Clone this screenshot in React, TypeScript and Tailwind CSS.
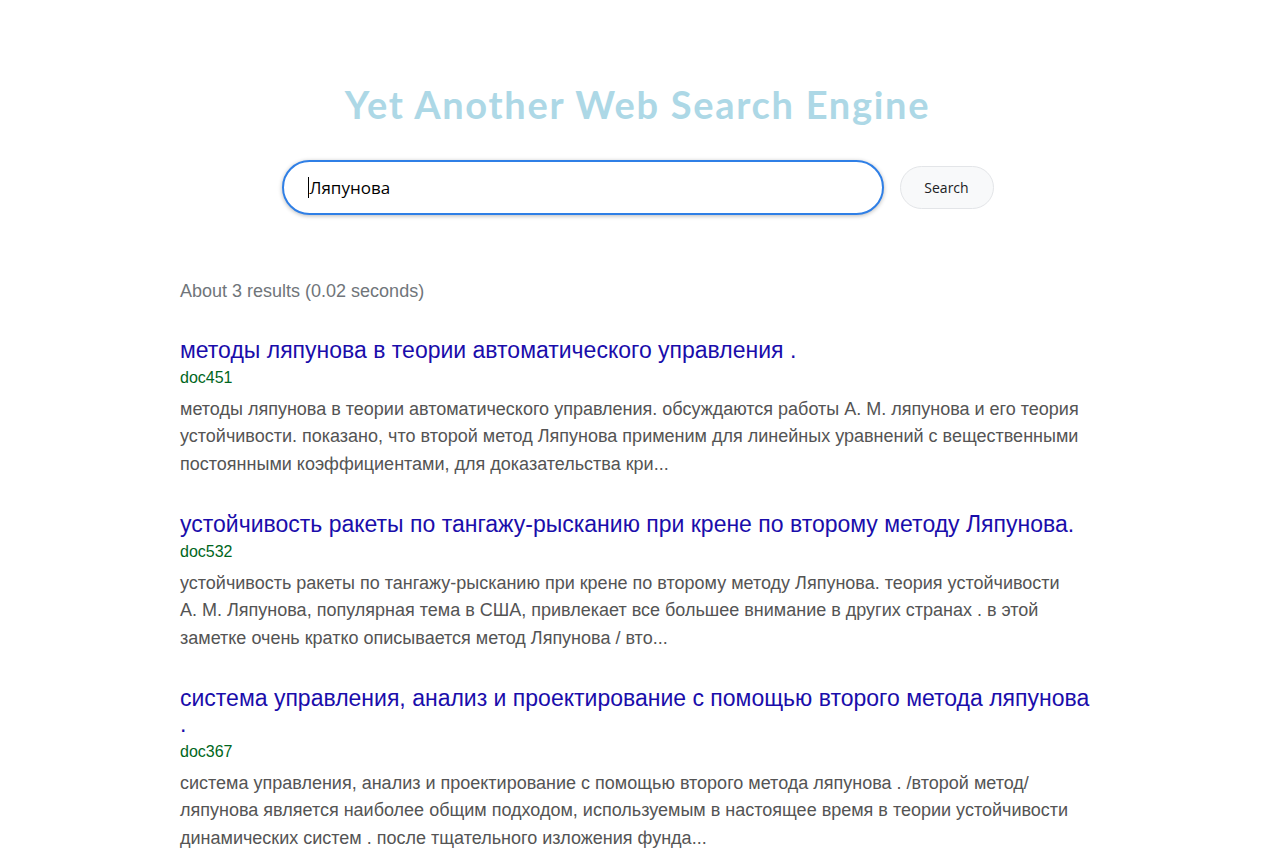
import React from "react";

const results = [
  {
    title: "методы ляпунова в теории автоматического управления .",
    doc: "doc451",
    snippet:
      "методы ляпунова в теории автоматического управления. обсуждаются работы А.\u00a0М. ляпунова и его теория устойчивости. показано, что второй метод Ляпунова применим для линейных уравнений с вещественными постоянными коэффициентами, для доказательства кри...",
  },
  {
    title: "устойчивость ракеты по тангажу-рысканию при крене по второму методу Ляпунова.",
    doc: "doc532",
    snippet:
      "устойчивость ракеты по тангажу-рысканию при крене по второму методу Ляпунова. теория устойчивости А.\u00a0М. Ляпунова, популярная тема в США, привлекает все большее внимание в других странах . в этой заметке очень кратко описывается метод Ляпунова / вто...",
  },
  {
    title: "система управления, анализ и проектирование с помощью второго метода ляпунова .",
    doc: "doc367",
    snippet:
      "система управления, анализ и проектирование с помощью второго метода ляпунова . /второй метод/ ляпунова является наиболее общим подходом, используемым в настоящее время в теории устойчивости динамических систем . после тщательного изложения фунда...",
  },
];

export default function App() {
  return (
    <div className="min-h-[849px] bg-white pr-[5px] pt-[82px] font-['Liberation_Sans',Arial,sans-serif]">
      <h1 className="text-center text-[38px] leading-[44px] font-bold text-[#add8e6] font-['Comic_Sans_MS','Lato',sans-serif] tracking-[1.7px]">
        Yet Another Web Search Engine
      </h1>
      <div className="mt-[34px] flex items-center justify-center">
        <div className="flex h-[55px] w-[602px] items-center rounded-full border-2 border-[#2f7fe6] bg-white pl-[24px] shadow-[0_1px_4px_rgba(0,0,0,0.28)]">
          <span className="mr-[1px] inline-block h-[21px] w-[1px] bg-black" />
          <span className="text-[17px] text-black font-['Open_Sans',sans-serif]">Ляпунова</span>
        </div>
        <button className="ml-[16px] h-[43px] w-[94px] rounded-full border border-[#e3e5e8] bg-[#f8f9fa] text-[14px] text-[#202124] font-['Open_Sans',sans-serif]">
          Search
        </button>
      </div>
      <div className="mx-auto mt-[64px] w-[915px]">
        <div className="text-[18px] leading-[24px] text-[#70757a]">About 3 results (0.02 seconds)</div>
        <div className="mt-[34px] flex flex-col gap-[33px]">
          {results.map((r) => (
            <div key={r.doc}>
              <a className="block text-[23px] leading-[26px] text-[#1a0dab]">{r.title}</a>
              <div className="mt-[4px] text-[16px] leading-[22px] text-[#006621]">{r.doc}</div>
              <div className="mt-[6.5px] text-[18px] leading-[27.5px] text-[#545454]">{r.snippet}</div>
            </div>
          ))}
        </div>
      </div>
    </div>
  );
}
